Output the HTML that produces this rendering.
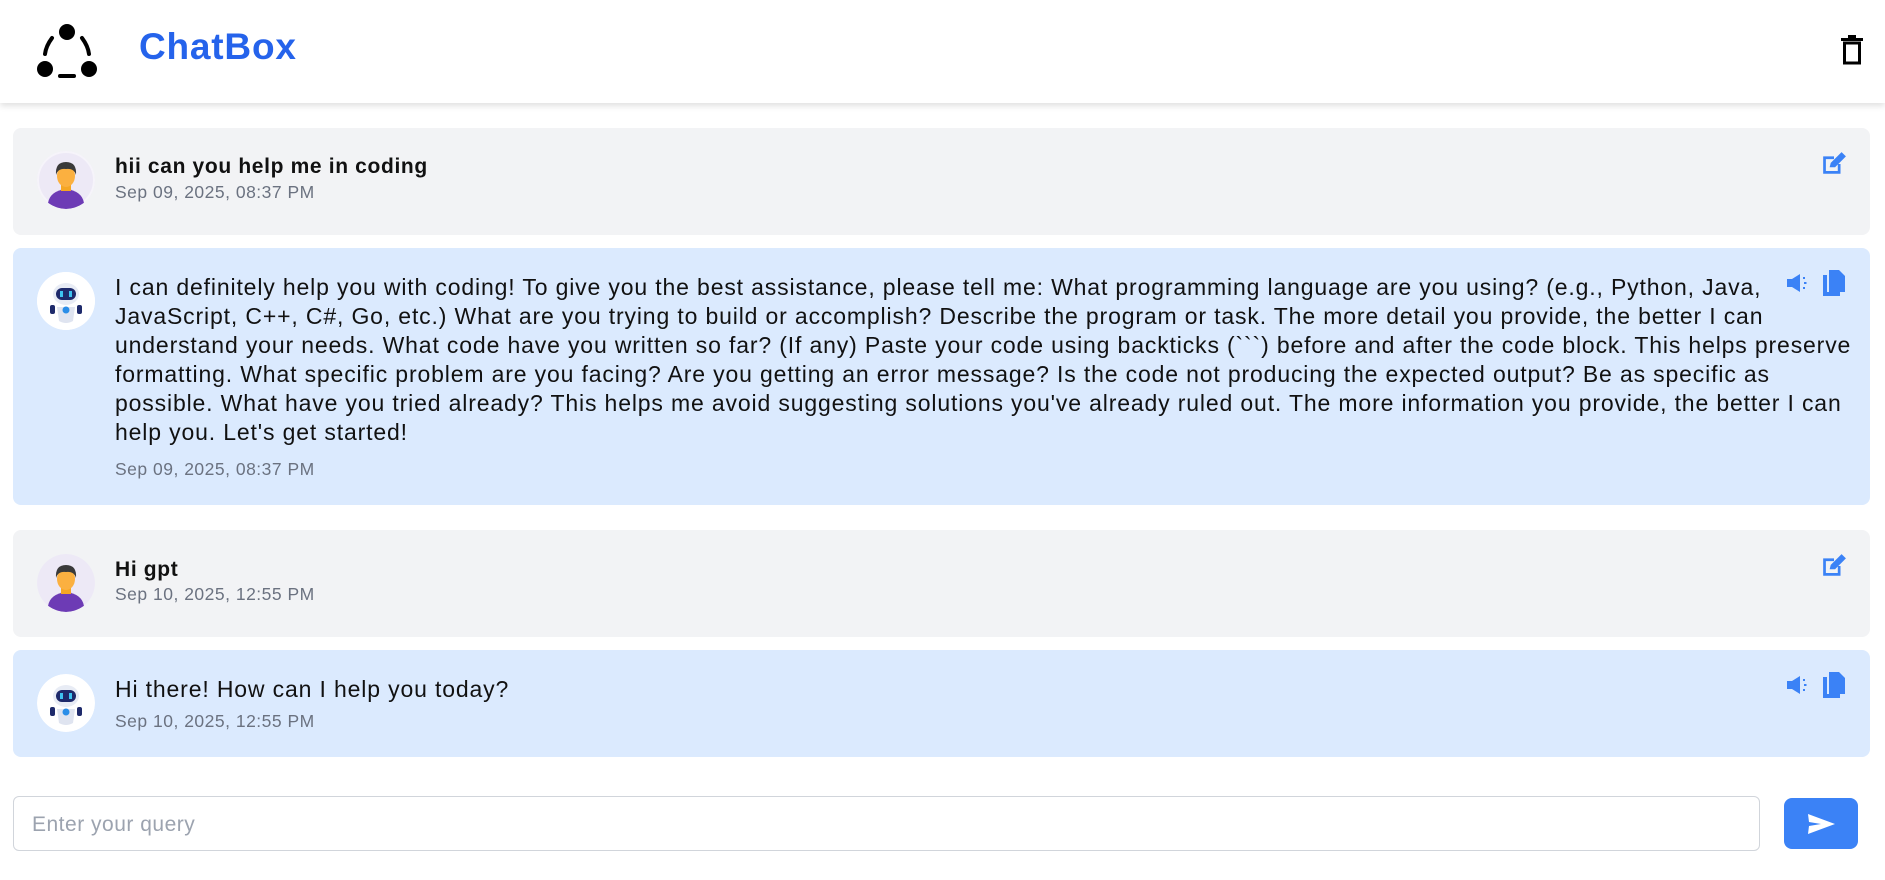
<!DOCTYPE html>
<html><head><meta charset="utf-8"><style>
*{box-sizing:border-box;margin:0;padding:0}
body{width:1885px;height:880px;background:#fff;font-family:"Liberation Sans",sans-serif;position:relative;overflow:hidden;color:#111}
.hdr{position:absolute;left:0;top:0;width:1885px;height:103px;background:#fff;box-shadow:0 3px 6px rgba(0,0,0,.12)}
.brand{position:absolute;left:139px;top:26px;font-size:37px;font-weight:bold;color:#2563eb;letter-spacing:.8px}
.card{position:absolute;left:13px;width:1857px;border-radius:8px}
.u{background:#f2f3f5}.b{background:#dbeafe}
.av{position:absolute;left:24px;width:58px;height:58px;border-radius:50%}
.t{position:absolute;left:102px;white-space:nowrap}
.ti{font-size:21px;font-weight:bold;letter-spacing:.65px}
.dt{font-size:17.5px;color:#6b7280;letter-spacing:.5px}
.msg{font-size:23px;line-height:29px;letter-spacing:.85px;color:#111}
.ic{position:absolute}
</style></head><body>
<div class="hdr">
<svg style="position:absolute;left:36px;top:22px" width="62" height="58" viewBox="0 0 62 58">
<circle cx="31" cy="10" r="8" fill="#000"/><circle cx="9" cy="47" r="8" fill="#000"/><circle cx="53" cy="47" r="8" fill="#000"/>
<path d="M16 16 Q10 24 9 32" stroke="#000" stroke-width="4" fill="none" stroke-linecap="round"/>
<path d="M46 16 Q52 24 53 32" stroke="#000" stroke-width="4" fill="none" stroke-linecap="round"/>
<path d="M24 54 H38" stroke="#000" stroke-width="4" stroke-linecap="round"/>
</svg>
<div class="brand">ChatBox</div>
<svg style="position:absolute;left:1841px;top:35px" width="22" height="30" viewBox="0 0 22 30">
<rect x="0" y="3" width="22" height="3" fill="#000"/><rect x="7" y="0" width="8" height="3" fill="#000"/>
<rect x="3.5" y="8" width="15" height="20" fill="none" stroke="#000" stroke-width="3"/>
</svg>
</div>

<div class="card u" style="top:128px;height:107px">
<svg class="av" style="top:23px" viewBox="0 0 58 58"><circle cx="29" cy="29" r="29" fill="#ede9f6"/><circle cx="29" cy="29" r="28" fill="none" stroke="#f6f4fa" stroke-width="2"/><path d="M11 52 Q13 40 29 38 Q45 40 47 52 Q38 58 29 58 Q20 58 11 52Z" fill="#6d3bb5"/><rect x="24" y="32" width="10" height="8" fill="#f5a623"/><ellipse cx="29" cy="25" rx="9" ry="11" fill="#fbb040"/><path d="M19 24 Q18 11 29 11 Q40 11 39 24 Q37 17 29 18 Q21 17 19 24Z" fill="#3a3a3a"/></svg>
<div class="t ti" style="top:27px">hii can you help me in coding</div>
<div class="t dt" style="top:54px">Sep 09, 2025, 08:37 PM</div>
<svg class="ic" style="left:1808px;top:24px" width="26" height="24" viewBox="0 0 24 22"><path d="M2 4h10v2.5H4.5v11h11V11H18v9H2z" fill="#3b82f6"/><path d="M8 14l1-4L19 0l4 4-10 10z" fill="#3b82f6"/></svg>
</div>

<div class="card b" style="top:248px;height:257px">
<svg class="av" style="top:24px;background:#fff" viewBox="0 0 58 58"><circle cx="29" cy="29" r="29" fill="#fff"/><ellipse cx="29" cy="22" rx="13" ry="11" fill="#e8ecf5"/><rect x="19" y="16" width="20" height="12" rx="6" fill="#1e2a6b"/><rect x="23" y="19" width="3" height="6" fill="#3ec3f0"/><rect x="32" y="19" width="3" height="6" fill="#3ec3f0"/><path d="M20 35h18l-2 14q-7 4-14 0z" fill="#dfe4f0"/><circle cx="29" cy="38" r="3.5" fill="#2b8ee8"/><rect x="13" y="33" width="5" height="9" rx="2" fill="#1e2a6b"/><rect x="40" y="33" width="5" height="9" rx="2" fill="#1e2a6b"/></svg>
<div class="t msg" style="top:25px">I can definitely help you with coding! To give you the best assistance, please tell me: What programming language are you using? (e.g., Python, Java,<br>JavaScript, C++, C#, Go, etc.) What are you trying to build or accomplish? Describe the program or task. The more detail you provide, the better I can<br>understand your needs. What code have you written so far? (If any) Paste your code using backticks (&#96;&#96;&#96;) before and after the code block. This helps preserve<br>formatting. What specific problem are you facing? Are you getting an error message? Is the code not producing the expected output? Be as specific as<br>possible. What have you tried already? This helps me avoid suggesting solutions you've already ruled out. The more information you provide, the better I can<br>help you. Let's get started!</div>
<div class="t dt" style="top:211px">Sep 09, 2025, 08:37 PM</div>
<svg class="ic" style="left:1773px;top:24px" width="24" height="22" viewBox="0 0 24 22"><path d="M1 7h5l8-5v18l-8-5H1z" fill="#3b82f6"/><rect x="17" y="5" width="2" height="2" fill="#3b82f6"/><rect x="18" y="10" width="2.5" height="2" fill="#3b82f6"/><rect x="17" y="15" width="2" height="2" fill="#3b82f6"/></svg>
<svg class="ic" style="left:1810px;top:22px" width="22" height="26" viewBox="0 0 22 26"><path d="M0 5h4v17h13v4H0z" fill="#3b82f6"/><path d="M6 0h10l6 6v16H6z" fill="#3b82f6"/></svg>
</div>

<div class="card u" style="top:530px;height:107px">
<svg class="av" style="top:24px" viewBox="0 0 58 58"><circle cx="29" cy="29" r="29" fill="#ede9f6"/><path d="M11 52 Q13 40 29 38 Q45 40 47 52 Q38 58 29 58 Q20 58 11 52Z" fill="#6d3bb5"/><rect x="24" y="32" width="10" height="8" fill="#f5a623"/><ellipse cx="29" cy="25" rx="9" ry="11" fill="#fbb040"/><path d="M19 24 Q18 11 29 11 Q40 11 39 24 Q37 17 29 18 Q21 17 19 24Z" fill="#3a3a3a"/></svg>
<div class="t ti" style="top:28px">Hi gpt</div>
<div class="t dt" style="top:54px">Sep 10, 2025, 12:55 PM</div>
<svg class="ic" style="left:1808px;top:24px" width="26" height="24" viewBox="0 0 24 22"><path d="M2 4h10v2.5H4.5v11h11V11H18v9H2z" fill="#3b82f6"/><path d="M8 14l1-4L19 0l4 4-10 10z" fill="#3b82f6"/></svg>
</div>

<div class="card b" style="top:650px;height:107px">
<svg class="av" style="top:24px" viewBox="0 0 58 58"><circle cx="29" cy="29" r="29" fill="#fff"/><ellipse cx="29" cy="22" rx="13" ry="11" fill="#e8ecf5"/><rect x="19" y="16" width="20" height="12" rx="6" fill="#1e2a6b"/><rect x="23" y="19" width="3" height="6" fill="#3ec3f0"/><rect x="32" y="19" width="3" height="6" fill="#3ec3f0"/><path d="M20 35h18l-2 14q-7 4-14 0z" fill="#dfe4f0"/><circle cx="29" cy="38" r="3.5" fill="#2b8ee8"/><rect x="13" y="33" width="5" height="9" rx="2" fill="#1e2a6b"/><rect x="40" y="33" width="5" height="9" rx="2" fill="#1e2a6b"/></svg>
<div class="t msg" style="top:25px">Hi there! How can I help you today?</div>
<div class="t dt" style="top:61px">Sep 10, 2025, 12:55 PM</div>
<svg class="ic" style="left:1773px;top:24px" width="24" height="22" viewBox="0 0 24 22"><path d="M1 7h5l8-5v18l-8-5H1z" fill="#3b82f6"/><rect x="17" y="5" width="2" height="2" fill="#3b82f6"/><rect x="18" y="10" width="2.5" height="2" fill="#3b82f6"/><rect x="17" y="15" width="2" height="2" fill="#3b82f6"/></svg>
<svg class="ic" style="left:1810px;top:22px" width="22" height="26" viewBox="0 0 22 26"><path d="M0 5h4v17h13v4H0z" fill="#3b82f6"/><path d="M6 0h10l6 6v16H6z" fill="#3b82f6"/></svg>
</div>

<div style="position:absolute;left:13px;top:796px;width:1747px;height:55px;border:1px solid #d1d5db;border-radius:6px;background:#fff">
<div style="position:absolute;left:18px;top:16px;font-size:21px;color:#9ca3af;letter-spacing:.5px">Enter your query</div>
</div>
<div style="position:absolute;left:1784px;top:798px;width:74px;height:51px;background:#3b82f6;border-radius:8px">
<svg style="position:absolute;left:24px;top:14px" width="27" height="24" viewBox="0 0 27 24"><path d="M0 2 L27 12 L0 22 L1 14 L13 12 L1 10Z" fill="#fff"/></svg>
</div>
</body></html>
